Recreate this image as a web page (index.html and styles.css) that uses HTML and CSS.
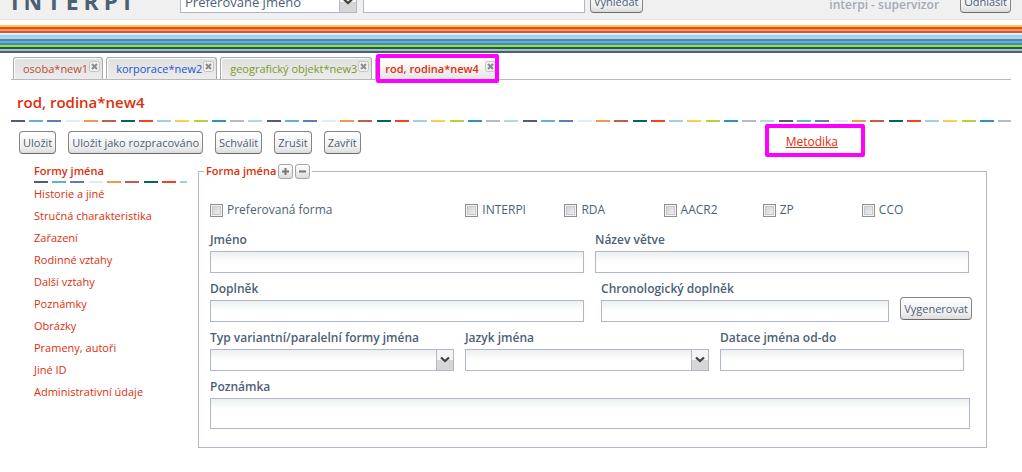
FILE: index.html
```html
<!DOCTYPE html>
<html lang="cs">
<head>
<meta charset="utf-8">
<title>INTERPI – rod, rodina</title>
<link rel="stylesheet" href="styles.css">
</head>
<body>
<svg class="defs" aria-hidden="true">
  <symbol id="close" viewBox="0 0 11 11">
    <rect x=".5" y=".5" width="10" height="10" rx="2" fill="#f1f1f1" stroke="#c4c4c4"/>
    <path d="M3 3l5 5M8 3l-5 5" stroke="#8b8b8b" stroke-width="2"/>
  </symbol>
  <symbol id="arrow" viewBox="0 0 16 20">
    <path d="M4 7.500l4 3.500 4-3.500" fill="none" stroke="#3f3f3f" stroke-width="2.200"/>
  </symbol>
</svg>

<header class="header">
  <div class="logo">INTERPI</div>
  <form class="search">
    <span class="select search-type">
      <select aria-label="Typ hledání"><option>Preferované jméno</option></select>
      <span class="arrow"><svg><use href="#arrow"/></svg></span>
    </span>
    <input class="field search-text" type="text" aria-label="Hledaný text">
    <button class="button" type="button">Vyhledat</button>
  </form>
  <span class="user">interpi - supervizor</span>
  <button class="button" type="button">Odhlásit</button>
</header>
<div class="stripes"></div>

<main class="page">
  <nav class="tabs">
    <div class="tab osoba"><a href="#">osoba*new1</a><button class="close" type="button" aria-label="Zavřít"><svg><use href="#close"/></svg></button></div>
    <div class="tab korporace"><a href="#">korporace*new2</a><button class="close" type="button" aria-label="Zavřít"><svg><use href="#close"/></svg></button></div>
    <div class="tab geo"><a href="#">geografický objekt*new3</a><button class="close" type="button" aria-label="Zavřít"><svg><use href="#close"/></svg></button></div>
    <div class="tab active marked"><a href="#">rod, rodina*new4</a><button class="close" type="button" aria-label="Zavřít"><svg><use href="#close"/></svg></button></div>
  </nav>

  <h1 class="title">rod, rodina*new4</h1>
  <div class="dashes"></div>

  <div class="toolbar">
    <button class="button" type="button">Uložit</button>
    <button class="button" type="button">Uložit jako rozpracováno</button>
    <button class="button" type="button">Schválit</button>
    <button class="button" type="button">Zrušit</button>
    <button class="button" type="button">Zavřít</button>
    <span class="help marked"><a href="#">Metodika</a></span>
  </div>

  <div class="content">
    <nav class="menu">
      <a class="current" href="#">Formy jména</a>
      <div class="dashes"></div>
      <a href="#">Historie a jiné</a>
      <a href="#">Stručná charakteristika</a>
      <a href="#">Zařazení</a>
      <a href="#">Rodinné vztahy</a>
      <a href="#">Další vztahy</a>
      <a href="#">Poznámky</a>
      <a href="#">Obrázky</a>
      <a href="#">Prameny, autoři</a>
      <a href="#">Jiné ID</a>
      <a href="#">Administrativní údaje</a>
    </nav>

    <fieldset class="form">
      <legend><span class="legend">Forma jména
        <button class="mini" type="button" aria-label="Přidat"><svg viewBox="0 0 13 13"><path d="M3 6.500h7M6.500 3v7"/></svg></button>
        <button class="mini" type="button" aria-label="Odebrat"><svg viewBox="0 0 13 13"><path d="M3 6.500h7"/></svg></button></span></legend>
      <div class="checks">
        <label><input type="checkbox">Preferovaná forma</label>
        <label><input type="checkbox">INTERPI</label>
        <label><input type="checkbox">RDA</label>
        <label><input type="checkbox">AACR2</label>
        <label><input type="checkbox">ZP</label>
        <label><input type="checkbox">CCO</label>
      </div>
      <div class="row names">
        <div><label class="label" for="jmeno">Jméno</label><input class="field" type="text" id="jmeno"></div>
        <div><label class="label" for="vetev">Název větve</label><input class="field" type="text" id="vetev"></div>
      </div>
      <div class="row additions">
        <div><label class="label" for="doplnek">Doplněk</label><input class="field" type="text" id="doplnek"></div>
        <div class="chrono"><label class="label" for="chrono">Chronologický doplněk</label><input class="field" type="text" id="chrono"></div>
        <button class="button generate" type="button">Vygenerovat</button>
      </div>
      <div class="row types">
        <div><label class="label" for="typ">Typ variantní/paralelní formy jména</label><span class="select"><select id="typ"><option></option></select><span class="arrow"><svg><use href="#arrow"/></svg></span></span></div>
        <div><label class="label" for="jazyk">Jazyk jména</label><span class="select"><select id="jazyk"><option></option></select><span class="arrow"><svg><use href="#arrow"/></svg></span></span></div>
        <div><label class="label" for="datace">Datace jména od-do</label><input class="field" type="text" id="datace"></div>
      </div>
      <div class="row note">
        <div><label class="label" for="poznamka">Poznámka</label><textarea class="field" id="poznamka" rows="1"></textarea></div>
      </div>
    </fieldset>
  </div>
</main>
</body>
</html>
```
FILE: styles.css
```css
* { box-sizing: border-box; }
body {
  margin: 0;
  background: #fff;
  color: #4d5f75;
  font: 12px/16px "Trebuchet MS", "Open Sans", sans-serif;
}
button, input, select, textarea { font: inherit; color: inherit; margin: 0; }
a { color: #dc2f0c; text-decoration: none; }
svg { display: block; width: 100%; height: 100%; }
.defs { position: absolute; width: 0; height: 0; }

.header {
  display: flex;
  align-items: flex-end;
  height: 20px;
  padding: 0 11px 6px;
  overflow: hidden;
  background: #f0f0f0;
  border-bottom: 1px solid #e4e4e4;
}
.logo {
  width: 169px;
  font-size: 23px;
  line-height: 24px;
  font-weight: 700;
  letter-spacing: 5px;
}
.search { display: flex; align-items: flex-end; }
.search-type { width: 177px; margin-right: 6px; font-size: 13px; }
.search-text { width: 222px; margin-right: 5px; }
.user { margin: 0 21px 0 auto; color: #a3abb8; font-weight: 600; }

.stripes {
  height: 28px;
  margin-top: 5px;
  background: linear-gradient(
    #fecb5b 2px, #ee4423 2px 4px, #f59650 4px 6px, #c55c48 6px 8px,
    #deedf4 8px 10px, #9cd0ef 10px 12px, #abd8ea 12px 14px, #5b7dbd 14px 16px,
    #63b0cf 16px 18px, #2f95b5 18px 20px, #b5d32f 20px 22px, #016a57 22px 24px,
    #b9b9c1 24px 26px, #4d5f75 26px);
}
.dashes {
  height: 2px;
  background: linear-gradient(90deg,
    #4d5f75 14px, #fff 14px 18px, #63b0cf 18px 32px, #fff 32px 36px,
    #5b7dbd 36px 50px, #fff 50px 55px, #deedf4 55px 69px, #fff 69px 73px,
    #f59650 73px 87px, #fff 87px 91px, #c55c48 91px 105px, #fff 105px 110px,
    #016a57 110px 124px, #fff 124px 128px, #ee4423 128px 142px, #fff 142px 146px,
    #9cd0ef 146px 160px, #fff 160px 164px, #fecb5b 164px 178px, #fff 178px 183px,
    #b5d32f 183px 197px, #fff 197px 201px, #2f95b5 201px 215px, #fff 215px 219px,
    #b9b9c1 219px 233px, #fff 233px 237px, #abd8ea 237px 251px, #fff 251px) 0 0 / 256px 2px;
}

.page { margin: 4px 11px 0; }
.tabs {
  display: flex;
  gap: 3px;
  padding-left: 2px;
  border-bottom: 1px solid #b9b9b9;
}
.tab {
  display: flex;
  gap: 1px;
  height: 22px;
  padding: 3px 2px 0 9px;
  border: 1px solid #a9a9a9;
  border-bottom: 0;
  border-radius: 3px 3px 0 0;
  background: linear-gradient(#e0e0e0, #ececec);
  box-shadow: inset 1px 1px #fff;
  font-size: 11px;
}
.tab.active {
  gap: 6px;
  background: linear-gradient(#fff, #e6e6e6);
  font-weight: 600;
}
.osoba a { color: #c04a36; }
.korporace a { color: #2454cc; }
.geo a { color: #7c9a24; }
.close { width: 11px; height: 11px; padding: 0; border: 0; background: none; }

.marked { position: relative; }
.marked::after {
  content: "";
  position: absolute;
  inset: 0;
  border: 4px solid #f0f;
  border-radius: 2px;
  pointer-events: none;
}
.tab.marked::after { inset: -4px -1px -4px 0; }

.title {
  margin: 0;
  padding: 12px 6px 8px;
  color: #dc2f0c;
  font-size: 15px;
  line-height: 20px;
  font-weight: 600;
}
.toolbar { display: flex; align-items: flex-end; gap: 12px; padding-left: 8px; }
.toolbar .button { margin-bottom: 3px; }
.help { margin: 2px 146px 0 auto; padding: 10px 27px 7px 21px; }
.help a { text-decoration: underline; }
.button {
  height: 23px;
  padding: 0 3px;
  border: 1px solid #858585;
  border-bottom-color: #6c6c6c;
  border-radius: 4px;
  background: linear-gradient(#fff, #f0f0f0 70%, #dcdcdc);
  font-size: 11px;
  white-space: nowrap;
}

.content {
  display: grid;
  grid-template-columns: 153px 1fr;
  gap: 11px;
  padding: 6px 24px 0 23px;
}
.menu { font-size: 11px; line-height: 22px; }
.menu a { display: block; }
.menu .current { margin-bottom: 2px; line-height: 16px; font-weight: 600; }
.form {
  min-width: 0;
  margin: 0;
  padding: 0 0 18px 11px;
  border: 1px solid #b3b5ca;
}
.form legend { margin-left: -6px; padding: 0 2px; color: #dc2f0c; font-weight: 600; font-size: 11px; }
.legend { display: flex; align-items: center; gap: 2px; }
.mini {
  width: 15px;
  height: 15px;
  padding: 0;
  border: 1px solid #a5a5a5;
  border-radius: 3px;
  background: linear-gradient(#fff, #dedede);
}
.mini path { stroke: #777; stroke-width: 2; fill: none; }

.checks {
  display: grid;
  grid-template-columns: 255fr repeat(4, 99fr) 124fr;
  padding: 23px 0 14px;
  font-size: 12px;
}
.checks label { display: flex; align-items: center; gap: 4px; }
.checks input {
  appearance: none;
  width: 13px;
  height: 13px;
  border: 1px solid #8c8f8e;
  background: linear-gradient(135deg, #c9ccd2, #f6f6f6);
  box-shadow: inset 0 0 0 1px #f4f4f4, inset 0 0 0 2px #c6c8cd;
}
.row { display: grid; column-gap: 11px; margin-bottom: 8px; }
.names { grid-template-columns: 1fr 1fr; padding-right: 17px; }
.additions { grid-template-columns: 374fr 294fr auto; padding-right: 14px; }
.types { grid-template-columns: 1fr 1fr 1fr; padding-right: 22px; }
.note { margin-bottom: 0; padding-right: 16px; }
.chrono { padding-left: 6px; }
.generate { align-self: end; margin-bottom: 2px; }
.label { display: block; margin-bottom: 3px; font-size: 12px; font-weight: 600; }
.field, .select select {
  display: block;
  width: 100%;
  height: 22px;
  padding: 0 4px;
  border: 1px solid #b3b5ca;
  border-radius: 0;
  background: linear-gradient(#ecf0f0, #fff 10px);
}
textarea.field { height: 31px; resize: none; }
.select { display: block; position: relative; }
.select select { appearance: none; }
.header .field, .header select { width: 100%; background: #fff; }
.header .search-text { width: 222px; }
.arrow {
  position: absolute;
  top: 1px;
  right: 1px;
  bottom: 1px;
  width: 17px;
  border-left: 1px solid #b3b5ca;
  background: linear-gradient(#f4f4f4 50%, #d6d6d6 50%);
  pointer-events: none;
}
```
